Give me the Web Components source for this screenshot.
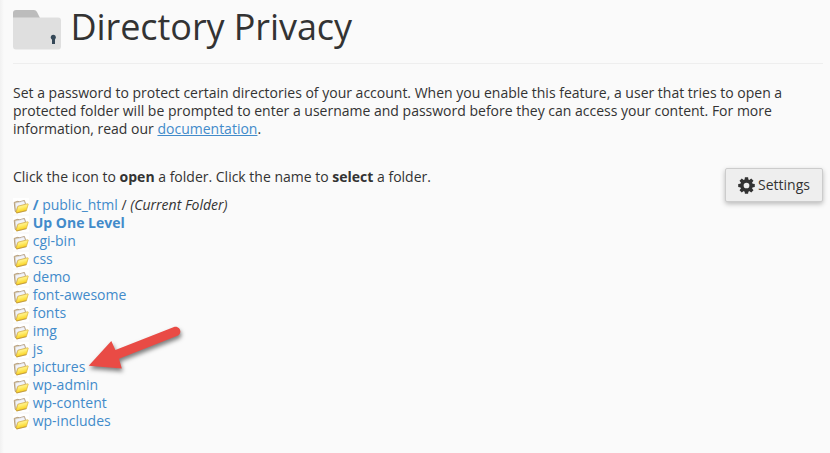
<!DOCTYPE html>
<html lang="en"><head><meta charset="utf-8"><title>Directory Privacy</title>
<style>
html,body{margin:0;height:100%;overflow:hidden}
body{background:#fafafa;color:#333;font:14px/18px "Open Sans","Noto Sans",sans-serif}
</style></head><body>
<privacy-page></privacy-page>
<script>
const define=(name,html)=>customElements.define(name,class extends HTMLElement{
  constructor(){super();this.attachShadow({mode:'open'}).innerHTML=html;}
});
define('page-heading',`<style>
:host{display:flex;align-items:flex-start;height:63px;border-bottom:1px solid #eee;gap:8.5px}
svg{display:block;margin-top:10px;flex:none}
h1{margin:7px 0 0;font-size:36px;line-height:40px;font-weight:400;white-space:nowrap;letter-spacing:-.07px}
</style>
<svg width="49" height="40" viewBox="0 0 49 40"><path d="M0 12V3Q0 0 3 0H21Q23 0 24 2L27 8V12Z" fill="#bcbcbc"/><path d="M0 7.5H45Q48 7.5 48 10.5V36.5Q48 39.5 45 39.5H3Q0 39.5 0 36.5Z" fill="#dfdfdf"/><circle cx="40.3" cy="27.3" r="2.5" fill="#354858"/><path d="M39 28h3v6h-3z" fill="#354858"/></svg>
<h1><slot></slot></h1>`);
define('folder-icon',`<style>:host{display:block;width:16px;height:16px;background:#fff;flex:none;white-space:normal}svg{display:block}</style>
<svg width="16" height="16" viewBox="0 0 16 16"><defs><linearGradient id="g" x1="0" y1="0" x2=".35" y2="1"><stop offset="0" stop-color="#fffbd0"/><stop offset=".5" stop-color="#ffed70"/><stop offset="1" stop-color="#f8cc10"/></linearGradient></defs>
<path d="M1.2 4.4L5 3.2l1 .7 5.4-1.4 1.1 3.2L4 14.4 2.2 13.4z" fill="#e2d0a4" stroke="#a88c68" stroke-width=".8"/>
<path d="M2.3 5.3l8.6-2.2 1.3 3.2L4.6 8.2 3.2 12z" fill="#f2f3fa" stroke="#c3c4cc" stroke-width=".4"/>
<path d="M5 8.2L14.6 5.8Q15.4 5.7 15.2 6.5L13.4 12.6 3.6 15 3.1 14z" fill="url(#g)" stroke="#d4a526" stroke-width=".6" stroke-linejoin="round"/><path d="M13.4 12.7L3.6 15" fill="none" stroke="#a98235" stroke-width=".6"/></svg>`);
define('folder-row',`<style>:host{display:flex;height:18px;line-height:18px;gap:4px;color:#428bca;white-space:pre}
folder-icon{margin-top:2px}span{margin-left:-.3px}</style><folder-icon></folder-icon><span><slot></slot></span>`);
define('settings-button',`<style>
:host{display:block;flex:none}
button{box-sizing:border-box;width:98px;height:34px;margin:0;padding:0 0 1px;display:flex;align-items:center;justify-content:center;gap:3px;font:inherit;color:#333;background:#eee;border:1px solid #ccc;border-radius:2px;box-shadow:0 2px 5px rgba(0,0,0,.26)}
svg{margin-top:1px}
</style><button><svg width="17" height="17" viewBox="-8 -8 16 16"><path id="a" fill="#333" d="M-1.5-7.8H1.5L2-4H-2ZM-1.5 7.8H1.5L2 4H-2Z"/><use href="#a" transform="rotate(45)"/><use href="#a" transform="rotate(90)"/><use href="#a" transform="rotate(135)"/><circle r="4.3" fill="none" stroke="#333" stroke-width="3.2"/></svg><slot></slot></button>`);
define('pointer-arrow',`<style>:host{display:block;position:absolute;left:80px;top:315px;pointer-events:none}svg{display:block;filter:drop-shadow(1px 3px 2px rgba(0,0,0,.5))}</style>
<svg width="110" height="65" viewBox="0 0 110 65"><path d="M8.7 50.8L31.3 26 35.4 35 94 11.9C100 10.4 103 18.2 97.5 20.8L39 43.8 41.8 53.5Z" fill="#e94b45"/></svg>`);
define('privacy-page',`<style>
:host{display:block;box-sizing:border-box;height:453px;padding:0 7px 0 13px;background:linear-gradient(90deg,#f1f1f1,#fafafa 4px)}
p{margin:0;white-space:nowrap}
.intro{margin-top:20px}
a{color:#428bca;text-decoration:underline}
.body{display:flex;justify-content:space-between;margin-top:30px}
.list{margin-top:10px}
</style>
<page-heading>Directory Privacy</page-heading>
<p class="intro">Set a password to protect certain directories of your account. When you enable this feature, a user that tries to open a<br>protected folder will be prompted to enter a username and password before they can access your content. For more<br>information, read our <a>documentation</a>.</p>
<div class="body"><div><p>Click the icon to <b>open</b> a folder. Click the name to <b>select</b> a folder.</p>
<div class="list">
<folder-row><b>/</b> public_html <span style="color:#333">/ <i>(Current Folder)</i></span></folder-row>
<folder-row><b>Up One Level</b></folder-row>
${['cgi-bin','css','demo','font-awesome','fonts','img','js','pictures','wp-admin','wp-content','wp-includes'].map(n=>`<folder-row>${n}</folder-row>`).join('')}
</div></div><settings-button>Settings</settings-button></div>
<pointer-arrow></pointer-arrow>`);
</script></body></html>
